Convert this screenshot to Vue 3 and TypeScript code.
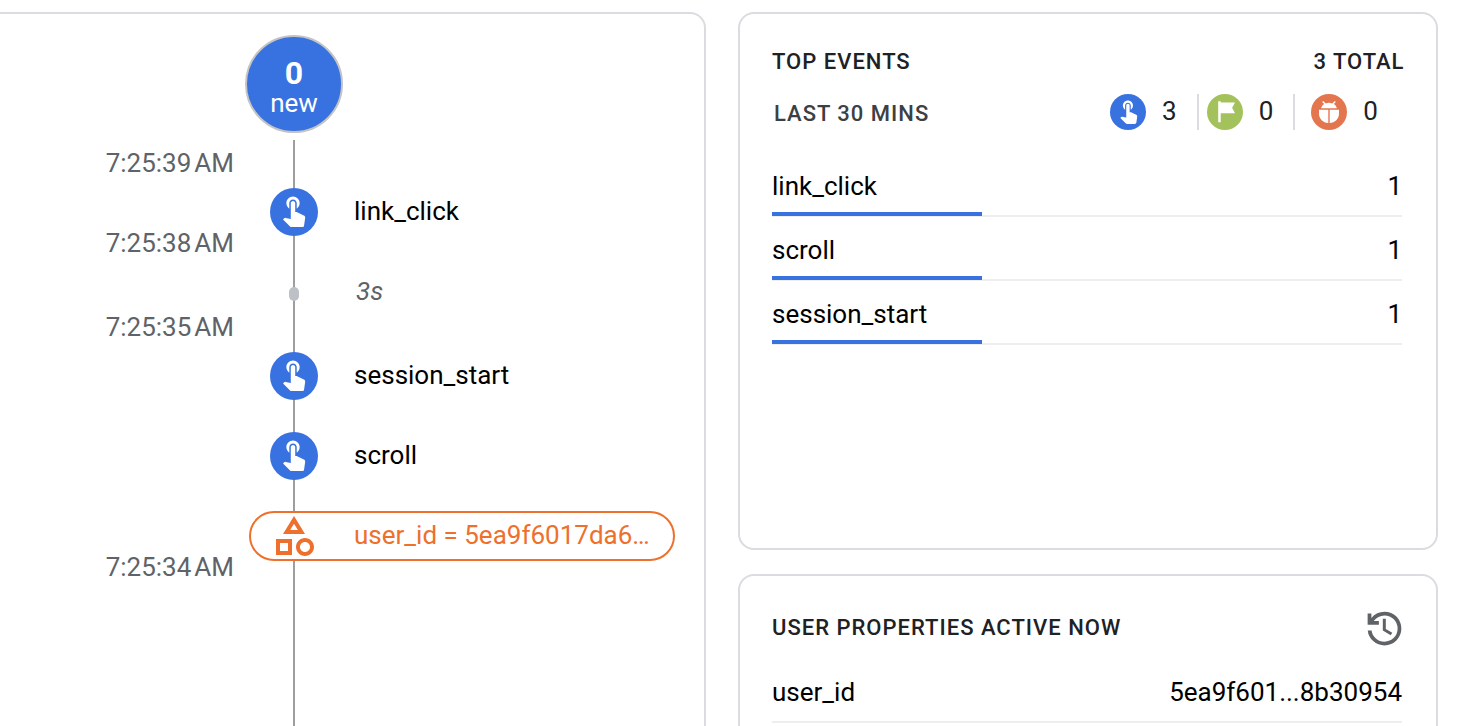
<script setup lang="ts">
interface Entry {
  kind: 'event' | 'gap' | 'property'
  label: string
  time?: string
}

const entries: Entry[] = [
  { kind: 'event', label: 'link_click', time: '7:25:38' },
  { kind: 'gap', label: '3s', time: '7:25:35' },
  { kind: 'event', label: 'session_start' },
  { kind: 'event', label: 'scroll' },
  { kind: 'property', label: 'user_id = 5ea9f6017da6…', time: '7:25:34' },
]

const topEvents = [
  { name: 'link_click', count: 1 },
  { name: 'scroll', count: 1 },
  { name: 'session_start', count: 1 },
]
const total = topEvents.reduce((sum, e) => sum + e.count, 0)

const touchPath =
  'M9 11.24V7.5C9 6.12 10.12 5 11.5 5S14 6.12 14 7.5v3.74c1.21-.81 2-2.18 2-3.74C16 5.01 13.99 3 11.5 3S7 5.01 7 7.5c0 1.56.79 2.93 2 3.74zm9.84 4.63l-4.54-2.26c-.17-.07-.35-.11-.54-.11H13v-6c0-.83-.67-1.5-1.5-1.5S10 6.67 10 7.5v10.74l-3.43-.72c-.08-.01-.15-.03-.24-.03-.31 0-.59.13-.79.33l-.79.8 4.94 4.94c.27.27.65.44 1.06.44h6.79c.75 0 1.33-.55 1.44-1.28l.75-5.27c.01-.07.02-.14.02-.2 0-.62-.38-1.16-.91-1.38z'
</script>

<template>
  <main class="page">
    <section class="card stream">
      <div class="axis"></div>
      <header class="stream-head">
        <div class="bubble">
          <strong>0</strong>
          <span>new</span>
        </div>
        <div class="time first"><span>7:25:39</span><span>AM</span></div>
      </header>
      <div v-for="(e, i) in entries" :key="i" class="entry" :class="e.kind">
        <div class="time"><template v-if="e.time"><span>{{ e.time }}</span><span>AM</span></template></div>
        <template v-if="e.kind === 'property'">
          <div class="pill">
            <svg class="shapes" viewBox="0 0 24 24">
              <path fill-rule="evenodd" d="M12 2l-5.5 9h11L12 2zm0 3.84L13.93 9h-3.87L12 5.84zM17.5 13c-2.49 0-4.5 2.01-4.5 4.5s2.01 4.5 4.5 4.5 4.5-2.01 4.5-4.5-2.01-4.5-4.5-4.5zm0 7c-1.38 0-2.5-1.12-2.5-2.5s1.12-2.5 2.5-2.5 2.5 1.12 2.5 2.5-1.12 2.5-2.5 2.5zM3 21.5h8v-8H3v8zm2-6h4v4H5v-4z" />
            </svg>
            <span class="pill-text">{{ e.label }}</span>
          </div>
        </template>
        <template v-else>
          <div class="marker">
            <div v-if="e.kind === 'event'" class="disc">
              <svg viewBox="0 0 24 24"><path :d="touchPath" /></svg>
            </div>
            <div v-else class="dot"></div>
          </div>
          <div class="label">{{ e.label }}</div>
        </template>
      </div>
    </section>

    <div class="side">
      <section class="card top">
        <header class="title-row">
          <h2>TOP EVENTS</h2>
          <h2 class="total">{{ total }} TOTAL</h2>
        </header>
        <div class="summary">
          <h3>LAST 30 MINS</h3>
          <div class="stat">
            <div class="disc small">
              <svg viewBox="0 0 24 24"><path :d="touchPath" /></svg>
            </div>
            <span>{{ total }}</span>
          </div>
          <div class="stat conversions">
            <svg class="badge" viewBox="0 0 36 36">
              <circle cx="18" cy="18" r="18" fill="#a4c25c" />
              <path fill="#fff" d="M11.200 7.300h2.500v1.100h14.300l-2.900 5.400 2.900 5.400H13.700v9.100h-2.500z" />
            </svg>
            <span>0</span>
          </div>
          <div class="stat errors">
            <svg class="badge" viewBox="0 0 36 36">
              <circle cx="18" cy="18" r="18" fill="#e3764e" />
              <path fill="#fff" d="M10.2 14.3c.3-2 1.400-3.500 3-4.400l-2-2 1-1 2.600 2.500c1-.4 2.100-.6 3.200-.6s2.200.2 3.200.6l2.600-2.500 1 1-2 2c1.600.9 2.700 2.400 3 4.400z" />
              <path fill="#fff" d="M8 15.700h9.300v13.300C12 28.800 8 24.900 8 19.500zM18.700 15.700H28v3.800c0 5.400-4 9.300-9.300 9.500z" />
            </svg>
            <span>0</span>
          </div>
        </div>
        <ul class="rows">
          <li v-for="e in topEvents" :key="e.name">
            <span>{{ e.name }}</span>
            <span class="count">{{ e.count }}</span>
            <i class="bar" :style="{ width: (e.count / total) * 100 + '%' }"></i>
          </li>
        </ul>
      </section>

      <section class="card props">
        <header class="title-row">
          <h2>USER PROPERTIES ACTIVE NOW</h2>
          <svg class="history" viewBox="0 -960 960 960">
            <path d="M480-120q-138 0-240.500-91.500T122-440h82q14 104 92.500 172T480-200q117 0 198.500-81.500T760-480q0-117-81.500-198.500T480-760q-69 0-129 32t-101 88h110v80H120v-240h80v94q51-64 124.500-99T480-840q75 0 140.500 28.500t114 77q48.500 48.500 77 114T840-480q0 75-28.500 140.500t-77 114q-48.500 48.500-114 77T480-120ZM444-690h64v218l138 84-34 54-168-102Z" />
          </svg>
        </header>
        <ul class="rows">
          <li>
            <span>user_id</span>
            <span>5ea9f601...8b30954</span>
          </li>
        </ul>
      </section>
    </div>
  </main>
</template>

<style>
body {
  background: #fff;
  overflow: hidden;
}
</style>

<style scoped>
.page {
  box-sizing: border-box;
  width: 1466px;
  height: 726px;
  padding-top: 12px;
  display: flex;
  gap: 32px;
  overflow: hidden;
  background: #fff;
  font: 26px/30px Roboto, sans-serif;
  color: #000;
}
.card {
  box-sizing: border-box;
  border: 2px solid #dadce0;
  border-radius: 16px;
  background: #fff;
}
.stream {
  position: relative;
  flex: none;
  width: 706px;
  height: 760px;
  border-left: 0;
  border-top-left-radius: 0;
}
.axis {
  position: absolute;
  left: 293px;
  top: 126px;
  bottom: 0;
  width: 2px;
  background: #9e9e9e;
}
.stream-head {
  height: 158px;
  box-sizing: border-box;
  padding-top: 21px;
  display: flex;
  flex-direction: column;
  justify-content: space-between;
}
.bubble {
  box-sizing: border-box;
  width: 98px;
  height: 98px;
  margin-left: 245px;
  padding-top: 20px;
  border: 2px solid #c4c4c4;
  border-radius: 50%;
  background: #3871e0;
  color: #fff;
  display: flex;
  flex-direction: column;
  align-items: center;
}
.bubble strong {
  font-size: 32px;
  line-height: 32px;
  font-weight: 700;
}
.bubble span {
  line-height: 28px;
}
.time {
  width: 234px;
  display: flex;
  justify-content: flex-end;
  gap: 3px;
  align-self: end;
  line-height: 18px;
  color: #5f6368;
}
.time.first {
  align-self: flex-start;
}
.entry {
  height: 80px;
  display: grid;
  grid-template-columns: 234px 120px 1fr;
  align-items: center;
}
.entry.gap {
  height: 84px;
}
.marker {
  position: relative;
  display: flex;
  justify-content: center;
}
.disc {
  width: 48px;
  height: 48px;
  border-radius: 50%;
  background: #3871e0;
  display: flex;
  align-items: center;
  justify-content: center;
}
.disc svg {
  width: 35.5px;
  height: 35.5px;
  margin-bottom: 5px;
  fill: #fff;
}
.disc.small {
  width: 36px;
  height: 36px;
}
.disc.small svg {
  width: 27px;
  height: 27px;
  margin-bottom: 4px;
}
.dot {
  width: 10px;
  height: 14px;
  border-radius: 5px;
  background: #bdc1c6;
}
.label {
  padding-bottom: 2px;
}
.gap .label {
  font-style: italic;
  color: #5f6368;
  padding: 0 0 6px 2px;
}
.pill {
  position: relative;
  grid-column: 2 / 4;
  box-sizing: border-box;
  width: 425.5px;
  height: 50px;
  margin-left: 15px;
  padding-left: 19px;
  border: 2px solid #ed702d;
  border-radius: 25px;
  background: #fff;
  color: #ed702d;
  display: flex;
  align-items: center;
  gap: 36px;
}
.pill-text {
  padding-bottom: 2px;
}
.shapes {
  width: 48px;
  height: 48px;
  fill: #ed702d;
}
.side {
  flex: none;
  width: 700px;
  display: flex;
  flex-direction: column;
  gap: 24px;
}
.top {
  flex: none;
  height: 538px;
  padding: 33px 34px 0 32px;
}
.props {
  flex: none;
  height: 200px;
  padding: 29px 34px 0 32px;
}
.title-row {
  display: flex;
  justify-content: space-between;
  align-items: center;
}
h2,
h3 {
  margin: 0;
  font-size: 22px;
  line-height: 30px;
  font-weight: 500;
  letter-spacing: 1px;
  color: #202124;
}
.total {
  margin-right: -2.5px;
}
.summary {
  display: flex;
  align-items: center;
  height: 36px;
  margin-top: 17px;
  color: #202124;
}
h3 {
  width: 338px;
  padding: 3px 0 0 2px;
  box-sizing: border-box;
  color: #3c4043;
}
.stat {
  box-sizing: border-box;
  height: 36px;
  display: flex;
  align-items: center;
  gap: 16px;
}
.stat > span {
  padding-bottom: 2px;
}
.conversions {
  margin-left: 20px;
  padding-left: 8px;
  border-left: 2px solid #dadce0;
}
.errors {
  margin-left: 20px;
  padding-left: 16px;
  border-left: 2px solid #dadce0;
}
.badge {
  width: 36px;
  height: 36px;
}
.rows {
  list-style: none;
  margin: 23px 0 0;
  padding: 0;
}
.rows li {
  position: relative;
  box-sizing: border-box;
  height: 64px;
  padding-top: 18px;
  border-bottom: 2px solid #eee;
  display: flex;
  justify-content: space-between;
}
.bar {
  position: absolute;
  left: 0;
  bottom: -1px;
  height: 4px;
  background: #3871e0;
}
.history {
  width: 45px;
  height: 45px;
  margin: 1px -4.5px -1px 0;
  fill: #5f6368;
}
.props .rows {
  margin-top: 9px;
}
</style>
